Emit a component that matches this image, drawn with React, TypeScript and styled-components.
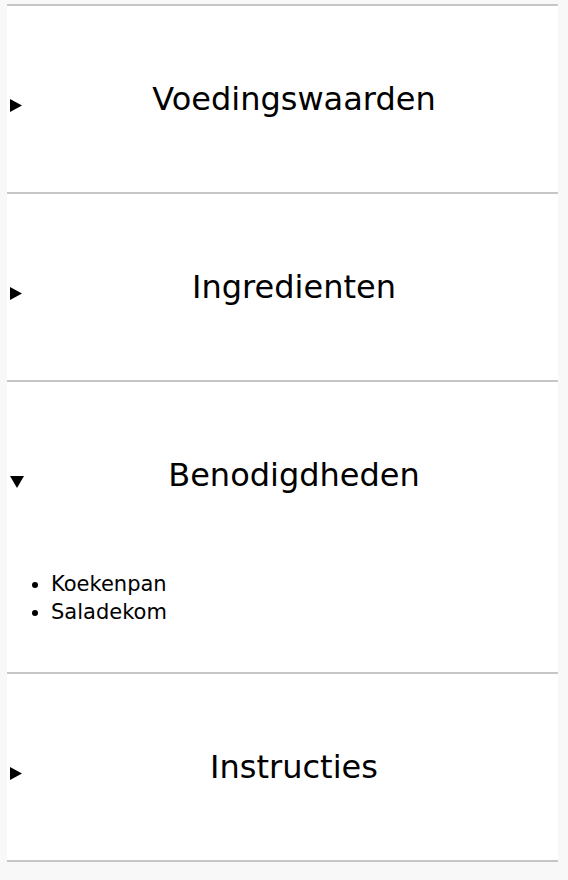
import styled, { createGlobalStyle } from 'styled-components';

const GlobalStyle = createGlobalStyle`
  html, body {
    margin: 0;
    padding: 0;
    background: #f8f8f8;
  }
  body {
    font-family: "DejaVu Sans", sans-serif;
    color: #000;
  }
`;

interface Section {
  title: string;
  open?: boolean;
  items?: string[];
}

const sections: Section[] = [
  { title: 'Voedingswaarden' },
  { title: 'Ingredienten' },
  { title: 'Benodigdheden', open: true, items: ['Koekenpan', 'Saladekom'] },
  { title: 'Instructies' },
];

function Arrow({ open }: { open?: boolean }) {
  return (
    <Marker>
      <svg width="16" height="14" viewBox="0 0 16 14">
        {open ? (
          <polygon points="1,1 15,1 8,13" fill="#000" />
        ) : (
          <polygon points="1,0 13,6.5 1,13" fill="#000" />
        )}
      </svg>
    </Marker>
  );
}

function App() {
  return (
    <>
      <GlobalStyle />
      <Page>
        {sections.map((s) => (
          <Block key={s.title}>
            <Summary>
              <Arrow open={s.open} />
              <Title>{s.title}</Title>
            </Summary>
            {s.open && s.items && (
              <List>
                {s.items.map((it) => (
                  <li key={it}>{it}</li>
                ))}
              </List>
            )}
          </Block>
        ))}
      </Page>
    </>
  );
}

export default App;

const Page = styled.main`
  width: 551px;
  margin: 4px 0 0 7px;
  background: #fff;
  border-top: 2px solid #c6c6c6;
`;

const Block = styled.section`
  border-bottom: 2px solid #c6c6c6;
`;

const Summary = styled.div`
  display: flex;
  align-items: center;
  height: 186px;
`;

const Marker = styled.span`
  display: flex;
  width: 23px;
  padding: 13px 0 0 2px;
  box-sizing: border-box;
`;

const Title = styled.h2`
  flex: 1;
  margin: 0;
  text-align: center;
  font-size: 32px;
  font-weight: normal;
`;

const List = styled.ul`
  margin: 0;
  padding: 2px 0 46px 44px;
  font-size: 21px;
  line-height: 28px;
`;
